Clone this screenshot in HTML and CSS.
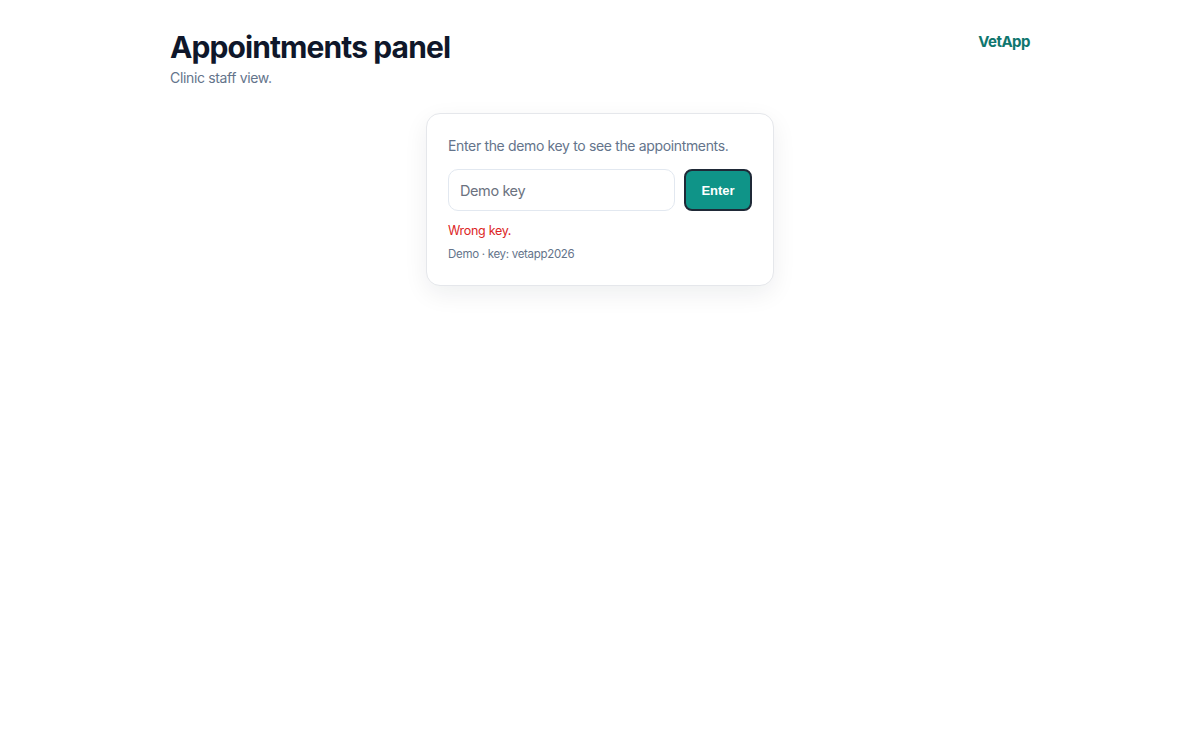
FILE: index.html
```html
<!DOCTYPE html>
<html lang="en">
<head>
    <meta charset="UTF-8">
    <meta name="viewport" content="width=device-width, initial-scale=1.0">
    <title>Appointments panel - VetApp</title>
    <link rel="stylesheet" href="styles.css">
</head>
<body>
    <div class="page">
        <header class="top-bar">
            <div>
                <h1>Appointments panel</h1>
                <p class="subtitle">Clinic staff view.</p>
            </div>
            <span class="brand">VetApp</span>
        </header>

        <div class="login-card">
            <p class="hint">Enter the demo key to see the appointments.</p>
            <form class="key-form">
                <input type="password" class="key-input" placeholder="Demo key">
                <button type="submit" class="key-button">Enter</button>
            </form>
            <p class="error">Wrong key.</p>
            <p class="demo-note">Demo · key: vetapp2026</p>
        </div>
    </div>
</body>
</html>
```

FILE: styles.css
```css
body {
    margin: 0;
    font-family: 'Inter', 'Noto Sans', sans-serif;
    background: #fff;
    color: #0f172a;
}

.page {
    max-width: 860px;
    margin: 0 auto;
    padding: 28px 0;
}

.top-bar {
    display: flex;
    justify-content: space-between;
    align-items: flex-start;
}

h1 {
    margin: 0;
    font-size: 30px;
    font-weight: 700;
    letter-spacing: -0.9px;
    line-height: 38px;
    color: #0f172a;
}

.subtitle {
    margin: 2px 0 0;
    font-size: 14px;
    line-height: 20px;
    color: #64748b;
    letter-spacing: -0.35px;
}

.brand {
    margin-top: 4px;
    font-size: 15px;
    font-weight: 700;
    color: #0f766e;
    letter-spacing: -0.5px;
}

.login-card {
    width: 348px;
    box-sizing: border-box;
    margin: 25px auto 0;
    padding: 22px 21px 23px;
    border: 1px solid #e5e7eb;
    border-radius: 14px;
    background: #fff;
    box-shadow: 0 8px 24px rgba(15, 23, 42, 0.07);
}

.hint {
    margin: 0;
    font-size: 14px;
    line-height: 20px;
    color: #64748b;
    letter-spacing: -0.35px;
}

.key-form {
    display: flex;
    gap: 9px;
    margin-top: 13px;
}

.key-input {
    flex: 1;
    min-width: 0;
    height: 42px;
    box-sizing: border-box;
    padding: 0 11px;
    border: 1px solid #e2e8f0;
    border-radius: 10px;
    font-family: inherit;
    font-size: 14.5px;
    letter-spacing: -0.4px;
    color: #0f172a;
}

.key-input::placeholder {
    color: #6b7280;
}

.key-button {
    width: 68px;
    height: 42px;
    border: 2px solid #1f2937;
    border-radius: 8px;
    background: #0f9488;
    color: #fff;
    font-family: 'Liberation Sans', Arial, sans-serif;
    font-size: 13px;
    font-weight: 700;
    cursor: pointer;
}

.error {
    margin: 11px 0 0;
    font-size: 12.5px;
    line-height: 18px;
    color: #dc2626;
    letter-spacing: -0.3px;
}

.demo-note {
    margin: 6px 0 0;
    font-size: 11.5px;
    line-height: 16px;
    color: #64748b;
    letter-spacing: -0.3px;
}
```
